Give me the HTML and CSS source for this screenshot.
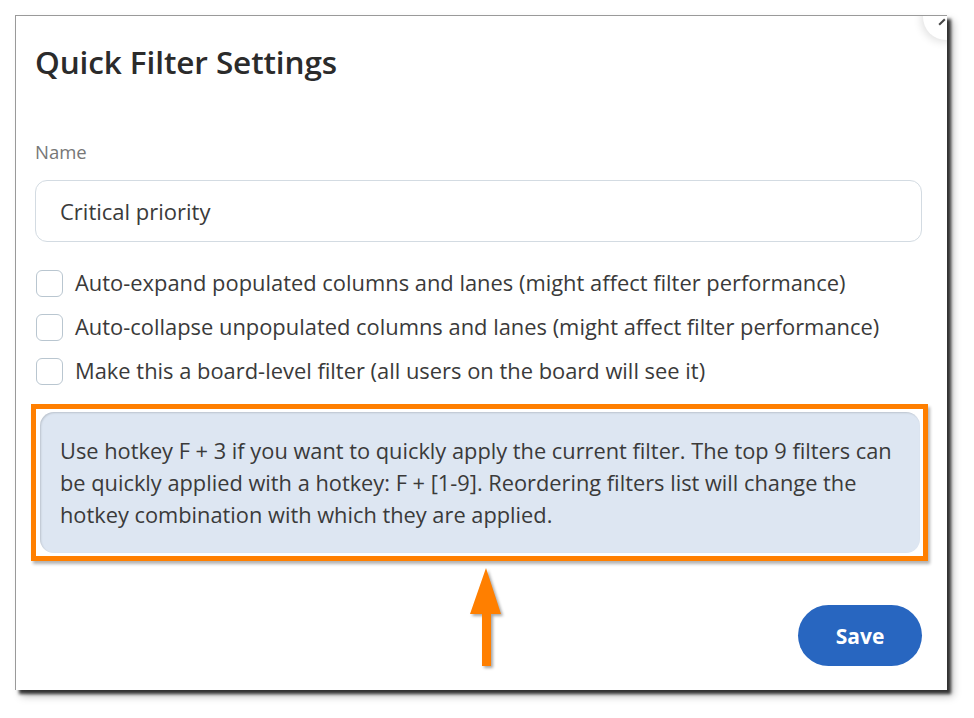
FILE: index.html
```html
<!DOCTYPE html>
<html>
<head>
<meta charset="utf-8">
<link rel="stylesheet" href="styles.css">
</head>
<body>
<div class="panel">
  <div class="close-ring"></div>
  <span class="close-mark"></span>
  <h1 class="title">Quick Filter Settings</h1>
  <div class="label">Name</div>
  <div class="input">Critical priority</div>
  <div class="checks">
    <div class="check-row"><span class="box"></span><span>Auto-expand populated columns and lanes (might affect filter performance)</span></div>
    <div class="check-row"><span class="box"></span><span>Auto-collapse unpopulated columns and lanes (might affect filter performance)</span></div>
    <div class="check-row"><span class="box"></span><span>Make this a board-level filter (all users on the board will see it)</span></div>
  </div>
  <div class="highlight">
    <div class="info">Use hotkey F + 3 if you want to quickly apply the current filter. The top 9 filters can be quickly applied with a hotkey: F + [1-9]. Reordering filters list will change the hotkey combination with which they are applied.</div>
  </div>
  <div class="footer">
    <button class="save">Save</button>
  </div>
  <svg class="arrow" width="40" height="110" viewBox="0 0 40 110">
    <polygon points="20,2 35,48 25,48 25,100 16,100 16,48 4,48" fill="#ff7f00"/>
  </svg>
</div>
</body>
</html>
```
FILE: styles.css
```css
* { box-sizing: border-box; }
html, body { margin: 0; padding: 0; background: #ffffff; }
body {
  font-family: "Open Sans", "Noto Sans", sans-serif;
  color: #3a3a3a;
  width: 974px;
  height: 718px;
  overflow: hidden;
}
.panel {
  position: relative;
  margin: 15px 0 0 15px;
  width: 932px;
  height: 675px;
  padding: 25px 25px 24px 19px;
  background: #ffffff;
  border-top: 1px solid #9a9a9a;
  border-left: 1px solid #9a9a9a;
  box-shadow: 4px 4px 3px rgba(0,0,0,0.75), 6px 6px 8px rgba(0,0,0,0.25);
  overflow: hidden;
}
.close-ring {
  position: absolute;
  right: -22px;
  top: -22px;
  width: 46px;
  height: 46px;
  border-radius: 50%;
  background: #ffffff;
  box-shadow: -2px 2px 8px rgba(0,0,0,0.12);
}
.close-mark {
  position: absolute;
  right: 4px;
  top: 2px;
  width: 2px;
  height: 8px;
  background: #444;
  transform: rotate(45deg);
}
.title {
  margin: 0;
  font-size: 31.5px;
  line-height: 42px;
  font-weight: 600;
  color: #2b2b2b;
  letter-spacing: -0.1px;
}
.label {
  margin-top: 57px;
  font-size: 18.5px;
  line-height: 24px;
  color: #777777;
}
.input {
  margin-top: 16px;
  height: 62px;
  border: 1px solid #d3dbe2;
  border-radius: 12px;
  padding: 0 24px;
  display: flex;
  align-items: center;
  font-size: 22px;
  color: #3a3a3a;
}
.checks {
  margin-top: 19px;
  display: flex;
  flex-direction: column;
}
.check-row {
  height: 44px;
  display: flex;
  align-items: center;
  gap: 12px;
  font-size: 21.9px;
  color: #3a3a3a;
}
.check-row span:last-child { margin-top: -2px; }
.box {
  width: 27px;
  height: 27px;
  border: 1px solid #b9c6d0;
  border-radius: 6px;
  flex: none;
  margin-left: 1px;
}
.highlight {
  margin: 11px -6px 0 -4px;
  border: 5px solid #ff7f00;
  padding: 3px 3px 3px 4px;
  background: #ffffff;
  box-shadow: 2px 3px 3px rgba(0,0,0,0.3);
}
.info {
  background: #dde6f2;
  border-radius: 14px;
  padding: 23px 18px 22px 20px;
  font-size: 21.8px;
  line-height: 32px;
  color: #3a3a3a;
  box-shadow: inset 1px 1px 2px rgba(0,0,0,0.15);
}
.footer {
  margin-top: 44px;
  display: flex;
  justify-content: flex-end;
}
.save {
  width: 124px;
  height: 61px;
  border: none;
  border-radius: 31px;
  background: #2866c0;
  color: #ffffff;
  font-family: "Open Sans", "Noto Sans", sans-serif;
  font-size: 21px;
  font-weight: 700;
  padding: 0;
}
.arrow {
  position: absolute;
  left: 450px;
  top: 550px;
  filter: drop-shadow(2px 2px 1.5px rgba(0,0,0,0.35));
}
```
